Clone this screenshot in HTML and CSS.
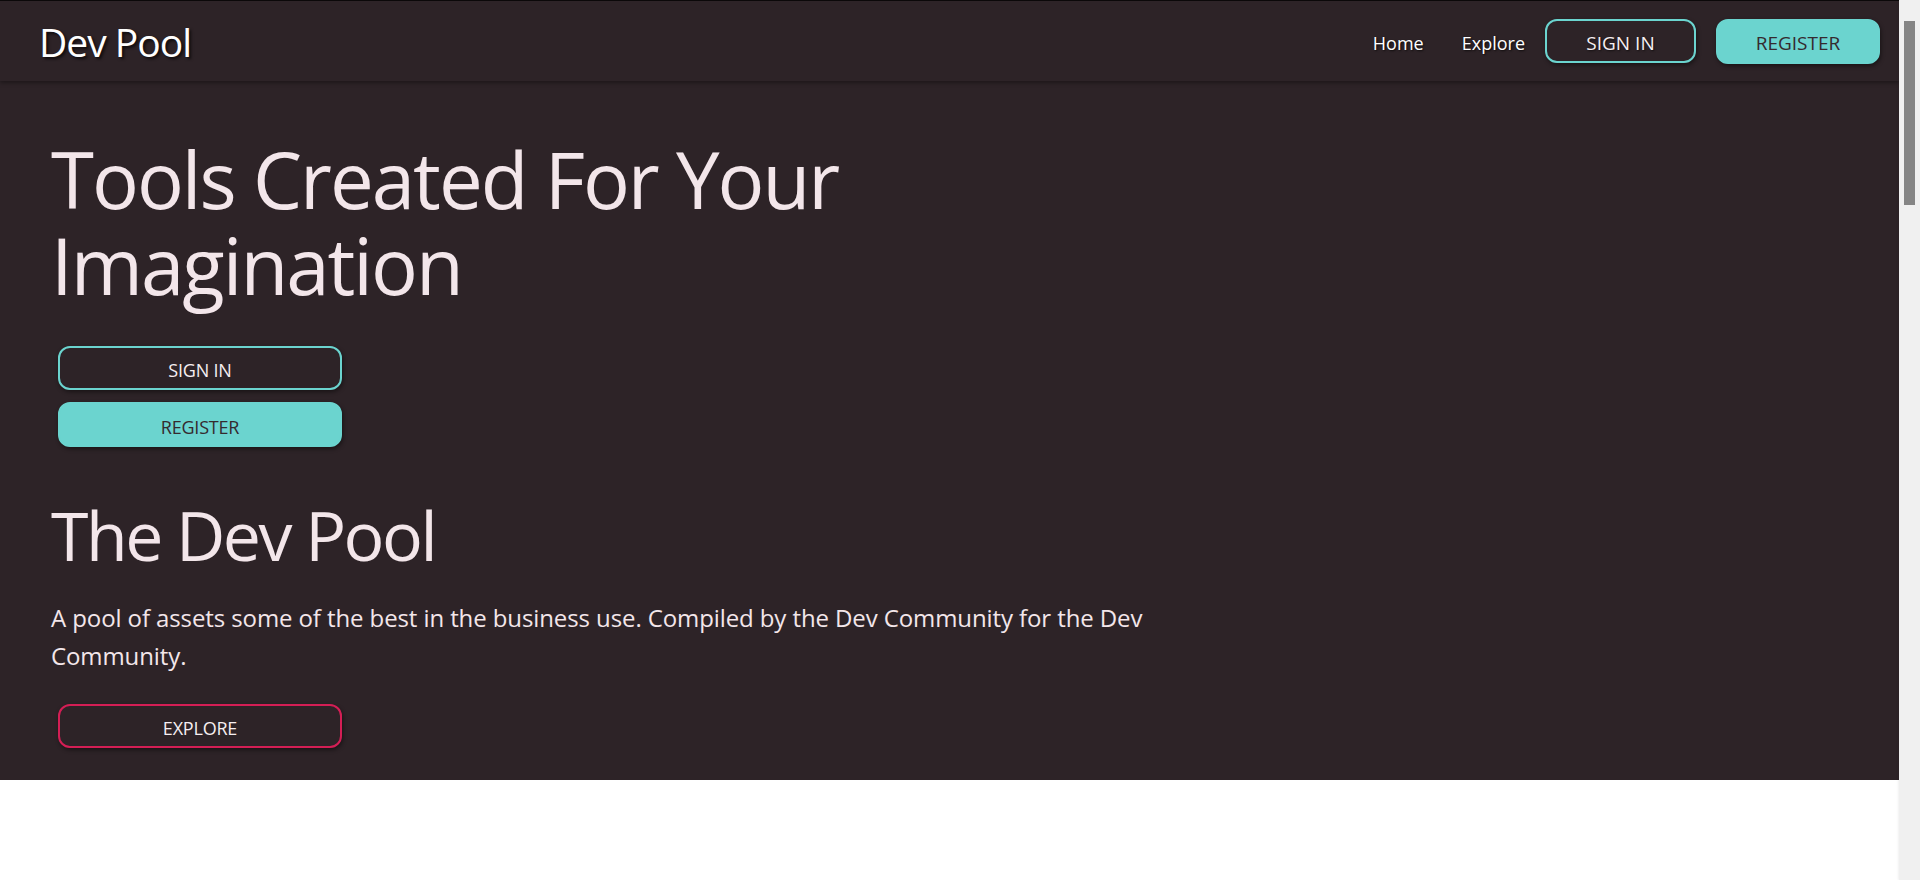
FILE: index.html
```html
<!DOCTYPE html>
<html lang="en">
<head>
<meta charset="utf-8">
<title>Dev Pool</title>
<link rel="stylesheet" href="styles.css">
</head>
<body>
<header class="navbar">
  <a class="brand" href="#">Dev Pool</a>
  <nav class="nav">
    <a class="nav-link" href="#">Home</a>
    <a class="nav-link" href="#">Explore</a>
    <a class="btn btn-outline-teal nav-btn nav-signin" href="#">SIGN IN</a>
    <a class="btn btn-teal nav-btn nav-register" href="#">REGISTER</a>
  </nav>
</header>
<main>
  <section class="hero">
    <div class="hero-inner">
      <h1 class="hero-title">Tools Created For Your Imagination</h1>
      <div class="hero-actions">
        <a class="btn btn-outline-teal btn-wide" href="#">SIGN IN</a>
        <a class="btn btn-teal btn-wide" href="#">REGISTER</a>
      </div>
      <h2 class="hero-subtitle">The Dev Pool</h2>
      <p class="lead">A pool of assets some of the best in the business use. Compiled by the Dev Community for the Dev Community.</p>
      <a class="btn btn-outline-crimson btn-wide" href="#">EXPLORE</a>
    </div>
  </section>
  <section class="below"></section>
</main>
<div class="scrollbar" aria-hidden="true"><div class="scrollbar-thumb"></div></div>
</body>
</html>
```
FILE: styles.css
```css
* { box-sizing: border-box; }

html, body {
  margin: 0;
  padding: 0;
}

body {
  font-family: "Open Sans", "Noto Sans", sans-serif;
  background: #ffffff;
  color: #f3e6ea;
  margin-right: 21px;
}

a { text-decoration: none; }

/* scrollbar look of the reference (window chrome overlay) */
.scrollbar {
  position: fixed;
  top: 0;
  right: 0;
  width: 21px;
  height: 100vh;
  background: #f0f0f0;
  padding: 21px 5px;
  z-index: 10;
  box-shadow: -1px 0 2px rgba(0, 0, 0, 0.06);
}

.scrollbar-thumb {
  height: 184px;
  background: #858585;
}

.navbar {
  position: relative;
  z-index: 2;
  height: 81px;
  border-top: 1px solid #0b0809;
  background: #2d2327;
  display: flex;
  align-items: center;
  justify-content: space-between;
  padding: 0 19px 0 39px;
  box-shadow: 0 2px 4px rgba(0, 0, 0, 0.35);
}

.brand {
  color: #ffffff;
  font-size: 39px;
  letter-spacing: -1px;
  text-shadow: 2px 2px 3px rgba(0, 0, 0, 0.7);
}

.nav {
  display: flex;
  align-items: center;
  gap: 20px;
}

.nav-link {
  color: #ffffff;
  font-size: 18px;
  padding-left: 18px;
  padding-top: 3px;
  text-shadow: 1px 1px 2px rgba(0, 0, 0, 0.7);
}

.btn {
  display: flex;
  align-items: center;
  justify-content: center;
  height: 44px;
  padding-top: 4px;
  border-radius: 12px;
  font-size: 18px;
  letter-spacing: -0.2px;
  border: 2px solid transparent;
  box-shadow: 1px 2px 4px rgba(0, 0, 0, 0.45);
}

.btn-outline-teal {
  border-color: #6bd4cf;
  color: #f6eef1;
  background: transparent;
}

.btn-teal {
  border-color: #6bd4cf;
  background: #6bd4cf;
  color: #352a2f;
  height: 45px;
}

.btn-outline-crimson {
  border-color: #d41e55;
  color: #f6eef1;
  background: transparent;
}

.nav-btn {
  font-size: 19px;
  letter-spacing: 0;
}

.nav-signin { width: 151px; text-shadow: 1px 1px 2px rgba(0, 0, 0, 0.6); }
.nav-register { width: 164px; }

.hero {
  background: #2d2327;
  padding: 55px 0 32px 51px;
}

.hero-inner {
  max-width: 1160px;
}

.hero-title {
  margin: 0;
  font-size: 78px;
  font-weight: 400;
  letter-spacing: -2px;
  line-height: 86px;
  color: #f3e6ea;
}

.hero-actions {
  display: flex;
  flex-direction: column;
  gap: 12px;
  margin-top: 38px;
}

.btn-wide {
  width: 284px;
  margin-left: 7px;
}

.hero-subtitle {
  margin: 46px 0 0;
  font-size: 68px;
  font-weight: 400;
  letter-spacing: -2.5px;
  line-height: 84px;
  color: #f3e6ea;
}

.lead {
  margin: 22px 0 29px;
  font-size: 24px;
  line-height: 38px;
  letter-spacing: -0.1px;
  color: #f3e6ea;
}

.below {
  height: 3228px;
  background: #ffffff;
}
```
